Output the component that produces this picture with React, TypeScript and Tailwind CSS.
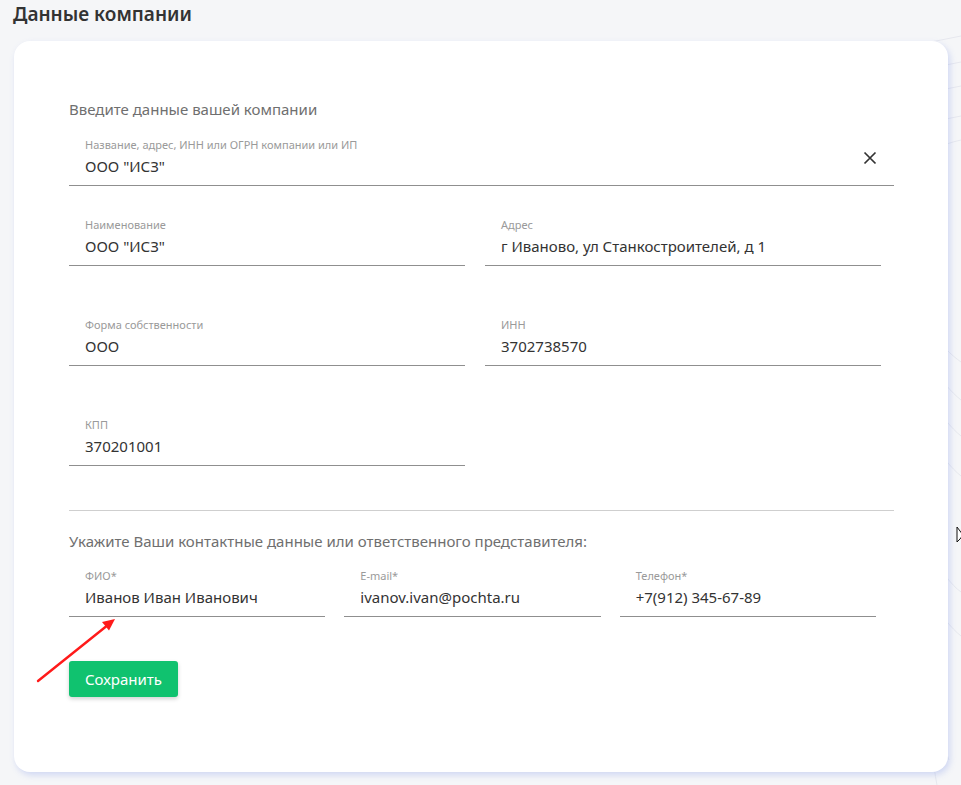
import React from 'react';

type FieldProps = {
  label: string;
  value: string;
  clearable?: boolean;
};

function Field({ label, value, clearable = false }: FieldProps) {
  return (
    <div className="relative border-b border-[#8f8f8f] px-4 pb-[9px]">
      <div className="text-[11px] leading-[14px] text-[#9a9a9a]">{label}</div>
      <div className="mt-[4px] text-[15px] leading-[20px] text-[#333]">{value}</div>
      {clearable && (
        <button className="absolute right-[17px] top-[13px] text-[#333]" aria-label="Очистить">
          <svg width="14" height="14" viewBox="0 0 14 14">
            <path d="M1.5 1.5 L12.5 12.5 M12.5 1.5 L1.5 12.5" stroke="currentColor" strokeWidth="1.7" fill="none" />
          </svg>
        </button>
      )}
    </div>
  );
}

export default function App() {
  return (
    <div
      className="relative min-h-[785px] overflow-hidden bg-[#f5f6f8]"
      style={{ fontFamily: '"Noto Sans", "Open Sans", sans-serif' }}
    >
      {/* faint background curves on the right */}
      <svg className="absolute right-0 top-0 h-[785px] w-[30px]" viewBox="0 0 30 785" fill="none">
        <path d="M0 42 C10 40, 20 38, 30 36" stroke="#e6e8ee" strokeWidth="1" />
        <path d="M0 68 C10 66, 20 64, 30 62" stroke="#e6e8ee" strokeWidth="1" />
        <path d="M0 92 C10 90, 20 88, 30 86" stroke="#e6e8ee" strokeWidth="1" />
        <path d="M0 122 C10 120, 20 118, 30 116" stroke="#e6e8ee" strokeWidth="1" />
        <path d="M0 150 C10 146, 20 142, 30 140" stroke="#e6e8ee" strokeWidth="1" />
        <path d="M0 330 C10 345, 20 355, 30 362" stroke="#e6e8ee" strokeWidth="1" />
        <path d="M0 365 C10 380, 20 392, 30 400" stroke="#e6e8ee" strokeWidth="1" />
        <path d="M0 400 C10 415, 20 428, 30 436" stroke="#e6e8ee" strokeWidth="1" />
        <path d="M0 440 C10 455, 20 468, 30 476" stroke="#e6e8ee" strokeWidth="1" />
        <path d="M0 555 C10 570, 20 585, 30 592" stroke="#e6e8ee" strokeWidth="1" />
        <path d="M0 600 C10 615, 20 628, 30 636" stroke="#e6e8ee" strokeWidth="1" />
        <path d="M8 700 C10 730, 14 750, 18 760" stroke="#e6e8ee" strokeWidth="1" />
        <path d="M0 740 C2 760, 4 775, 6 785" stroke="#e6e8ee" strokeWidth="1" />
      </svg>

      {/* cursor */}
      <svg className="absolute left-[956px] top-[526px]" width="8" height="18" viewBox="0 0 8 18">
        <path d="M1 1 L1 16 L4 13 L7 9 Z" fill="#fff" stroke="#111" strokeWidth="1" />
      </svg>

      <h1 className="px-[13px] pt-[2px] text-[19px] font-semibold leading-[24px] text-[#333]">Данные компании</h1>

      <div className="relative ml-[14px] mt-[15px] w-[934px] rounded-[16px] bg-white pb-[75px] pl-[55px] pr-[54px] pt-[58px] shadow-[2px_3px_6px_rgba(110,135,230,0.28)]">
        <div className="text-[15px] leading-[20px] text-[#6f6f6f]">Введите данные вашей компании</div>

        <div className="mt-[19px]">
          <Field label="Название, адрес, ИНН или ОГРН компании или ИП" value={'ООО "ИСЗ"'} clearable />
        </div>

        <div className="mt-[32px] grid w-[812px] grid-cols-2 gap-x-[20px] gap-y-[52px]">
          <Field label="Наименование" value={'ООО "ИСЗ"'} />
          <Field label="Адрес" value="г Иваново, ул Станкостроителей, д 1" />
          <Field label="Форма собственности" value="ООО" />
          <Field label="ИНН" value="3702738570" />
          <Field label="КПП" value="370201001" />
        </div>

        <div className="mt-[44px] border-t border-[#cfcfcf]" />

        <div className="mt-[20px] text-[15px] leading-[20px] text-[#6f6f6f]">
          Укажите Ваши контактные данные или ответственного представителя:
        </div>

        <div className="mt-[18px] grid w-[807px] grid-cols-3 gap-x-[19px]">
          <Field label="ФИО*" value="Иванов Иван Иванович" />
          <Field label="E-mail*" value="ivanov.ivan@pochta.ru" />
          <Field label="Телефон*" value="+7(912) 345-67-89" />
        </div>

        <button className="mt-[44px] h-[36px] w-[109px] rounded-[3px] bg-[#10c26f] text-[15px] text-white shadow-[0_2px_4px_rgba(0,0,0,0.18)]">
          Сохранить
        </button>

        {/* red annotation arrow */}
        <svg className="pointer-events-none absolute left-[14px] top-[570px]" width="100" height="80" viewBox="0 0 100 80" fill="none">
          <path d="M10 70 L78 15.5" stroke="#ff1a1a" strokeWidth="2.4" strokeLinecap="round" />
          <path d="M87 8 L81 19.5 L74 11 Z" fill="#ff1a1a" />
        </svg>
      </div>
    </div>
  );
}
